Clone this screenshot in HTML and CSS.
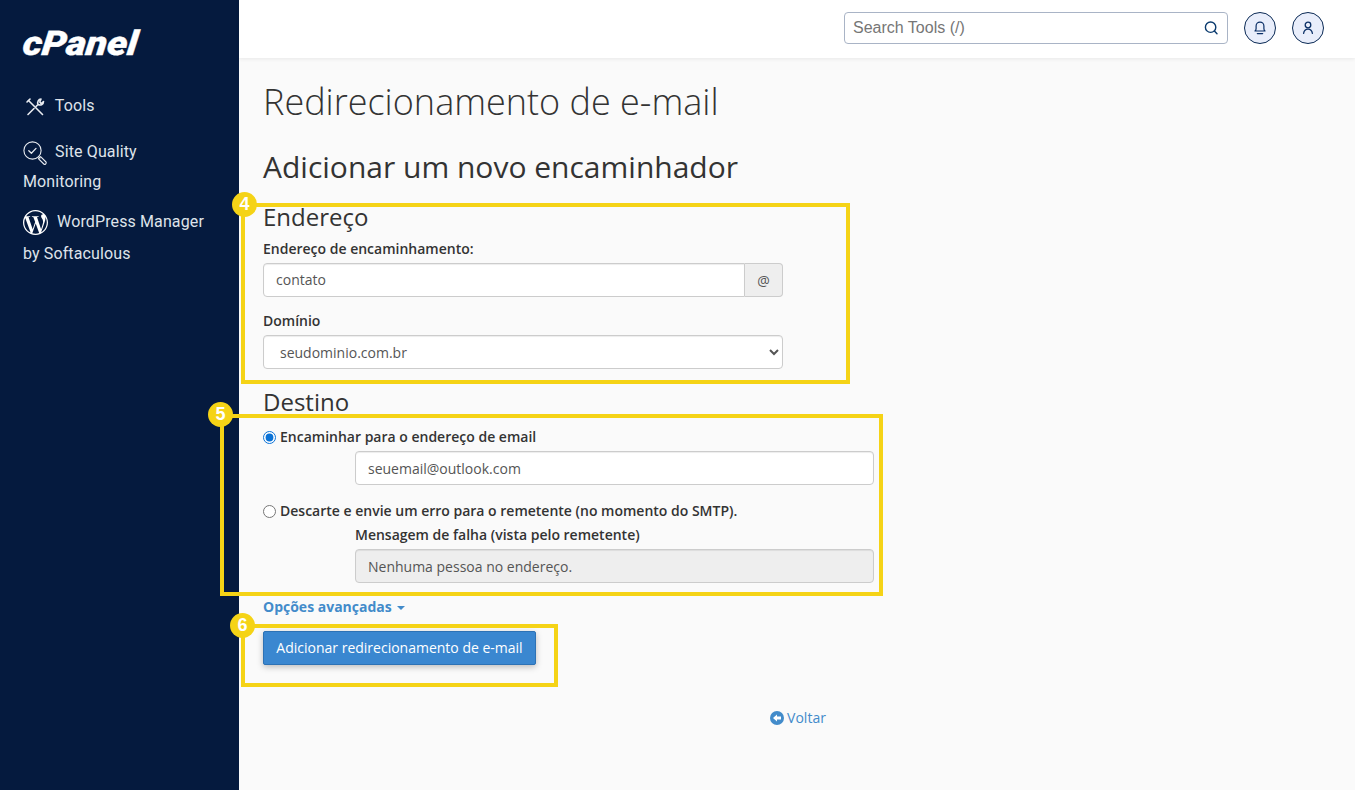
FILE: index.html
```html
<!DOCTYPE html>
<html lang="pt-BR">
<head>
<meta charset="utf-8">
<title>Redirecionamento de e-mail</title>
<link rel="stylesheet" href="styles.css">
</head>
<body>
<div class="app">
  <aside class="sidebar">
    <div class="logo"><span class="logo-text">cPanel</span></div>
    <nav class="nav">
      <a class="nav-item nav-tools">
        <svg class="ico ico-tools" viewBox="0 0 20 20" fill="none" stroke="#e8ebf0" stroke-width="1.6" stroke-linecap="round" stroke-linejoin="round">
          <path d="M2 5 L5 2"/>
          <path d="M3.5 3.5 L17.5 17.5"/>
          <path d="M3 17.5 L9 11.5"/>
          <path d="M11 9.5 L13 7.5 C12 5 13.5 2 16 2 L14.8 5 L16 6.5 L18.5 4.5 C18.5 7 16 9 13 7.5"/>
        </svg>
        <span>Tools</span>
      </a>
      <a class="nav-item nav-sqm">
        <svg class="ico ico-sqm" viewBox="0 0 24 24" fill="none" stroke="#e8ebf0" stroke-width="1.1" stroke-linecap="round" stroke-linejoin="round">
          <circle cx="9.5" cy="9.5" r="8.6"/>
          <path d="M5.8 9.8 L8.4 12.2 L13 7.4" stroke-width="1.3"/>
          <path d="M15.6 15.6 L17 17"/>
          <path d="M17.6 15.6 L23 21 Q23.6 22 22.6 23 Q21.7 23.8 20.8 23 L15.4 17.6 Z"/>
        </svg>
        <span>Site Quality Monitoring</span>
      </a>
      <a class="nav-item nav-wp">
        <svg class="ico ico-wp" viewBox="0 0 24 24" fill="#fff"><path d="M21.469 6.825c.84 1.537 1.318 3.3 1.318 5.175 0 3.979-2.156 7.456-5.363 9.325l3.295-9.527c.615-1.54.82-2.771.82-3.864 0-.405-.026-.78-.07-1.11m-7.981.105c.647-.03 1.232-.105 1.232-.105.582-.075.514-.93-.067-.899 0 0-1.755.135-2.88.135-1.064 0-2.85-.15-2.85-.15-.585-.03-.661.855-.075.885 0 0 .54.061 1.125.09l1.68 4.605-2.37 7.08L5.354 6.9c.649-.03 1.234-.1 1.234-.1.585-.075.516-.93-.065-.896 0 0-1.746.138-2.874.138-.2 0-.438-.008-.69-.015C4.911 3.15 8.235 1.215 12 1.215c2.809 0 5.365 1.072 7.286 2.833-.046-.003-.091-.009-.141-.009-1.06 0-1.812.923-1.812 1.914 0 .89.513 1.643 1.06 2.531.411.72.89 1.643.89 2.977 0 .915-.354 1.994-.821 3.479l-1.075 3.585-3.9-11.61.001.014zM12 22.784c-1.059 0-2.081-.153-3.048-.437l3.237-9.406 3.315 9.087c.024.053.05.101.078.149-1.12.393-2.325.609-3.582.609M1.211 12c0-1.564.336-3.05.935-4.39L7.29 21.709C3.694 19.96 1.212 16.271 1.211 12M12 0C5.385 0 0 5.385 0 12s5.385 12 12 12 12-5.385 12-12S18.615 0 12 0"/></svg>
        <span>WordPress Manager by Softaculous</span>
      </a>
    </nav>
  </aside>
  <div class="main">
    <header class="topbar">
      <div class="search">
        <input class="search-input" type="text" placeholder="Search Tools (/)">
        <svg class="search-ico" viewBox="0 0 16 16" fill="none" stroke="#0a3a6e" stroke-width="1.4" stroke-linecap="round"><circle cx="7.6" cy="7.2" r="5.2"/><path d="M11.4 11 L14 13.8"/></svg>
      </div>
      <button class="round-btn" aria-label="Notificações">
        <svg viewBox="0 0 16 16" fill="none" stroke="#0a2f66" stroke-width="1.2" stroke-linecap="round" stroke-linejoin="round"><path d="M3 11 H13 Q11.9 10 11.9 8.4 V6 A3.9 3.9 0 0 0 4.1 6 V8.4 Q4.1 10 3 11 Z"/><path d="M5.4 13.6 H10.6" stroke-width="1.4"/></svg>
      </button>
      <button class="round-btn" aria-label="Usuário">
        <svg viewBox="0 0 16 16" fill="none" stroke="#0a2f66" stroke-width="1.3" stroke-linecap="round"><circle cx="8" cy="5" r="2.8"/><path d="M3.6 13.4 C4 10.8 5.6 9.2 8 9.2 C10.4 9.2 12 10.8 12.4 13.4"/></svg>
      </button>
    </header>
    <main class="content">
      <h1 class="page-title">Redirecionamento de e-mail</h1>
      <h2 class="sub-title">Adicionar um novo encaminhador</h2>
      <form class="form">
        <h3 class="sec-title">Endereço</h3>
        <label class="label">Endereço de encaminhamento:</label>
        <div class="input-group">
          <input class="field group-field" type="text" value="contato">
          <span class="addon">@</span>
        </div>
        <label class="label label-domain">Domínio</label>
        <select class="field select"><option>seudominio.com.br</option></select>
        <h3 class="sec-title sec-dest">Destino</h3>
        <label class="radio-row"><input type="radio" name="dest" checked><span>Encaminhar para o endereço de email</span></label>
        <div class="indent"><input class="field wide" type="text" value="seuemail@outlook.com"></div>
        <label class="radio-row radio-two"><input type="radio" name="dest"><span>Descarte e envie um erro para o remetente (no momento do SMTP).</span></label>
        <div class="indent">
          <div class="fail-label">Mensagem de falha (vista pelo remetente)</div>
          <input class="field wide" type="text" value="Nenhuma pessoa no endereço." disabled>
        </div>
        <a class="advanced">Opções avançadas <i class="caret"></i></a>
        <button class="submit" type="button">Adicionar redirecionamento de e-mail</button>
      </form>
      <div class="back">
        <a class="back-link">
          <svg viewBox="0 0 14 14"><circle cx="7" cy="7" r="7" fill="#428bca"/><path d="M3 7 L7 3.4 V5.6 H11 V8.4 H7 V10.6 Z" fill="#fff"/></svg>
          <span>Voltar</span>
        </a>
      </div>
    </main>
  </div>
</div>
<div class="frame frame-4"><span class="badge">4</span></div>
<div class="frame frame-5"><span class="badge">5</span></div>
<div class="frame frame-6"><span class="badge">6</span></div>
</body>
</html>
```
FILE: styles.css
```css
* { box-sizing: border-box; }
html, body { margin: 0; height: 100%; overflow: hidden; }
body { font-family: "Open Sans", sans-serif; color: #333; background: #fafafa; }
.app { display: flex; height: 790px; }

.sidebar { width: 239px; flex: none; background: #051a3e; padding: 25px 23px 0; font-family: Roboto, sans-serif; }
.logo { height: 36px; }
.logo-text { display: inline-block; margin-left: -2px; font-family: Roboto, sans-serif; font-weight: 900; font-style: italic; font-size: 34px; line-height: 36px; color: #fff; -webkit-text-stroke: .4px #fff; transform-origin: left bottom; transform: scaleX(1.13) skewX(-6deg); }
.nav { margin-top: 30px; }
.nav-item { display: block; color: #dfe3ea; font-size: 16px; font-weight: 400; letter-spacing: .12px; line-height: 30px; }
.ico { display: inline-block; vertical-align: middle; }
.ico-tools { width: 20px; height: 20px; margin-right: 6px; margin-left: 2px; }
.nav-tools { height: 30px; margin-bottom: 16px; }
.ico-sqm { width: 24px; height: 24px; margin-right: 4px; }
.nav-sqm { margin-bottom: 9px; }
.ico-wp { width: 25px; height: 25px; margin-right: 5px; }
.nav-wp { line-height: 32px; }

.main { flex: 1; min-width: 0; display: flex; flex-direction: column; }
.topbar { height: 58px; flex: none; background: #fff; box-shadow: 0 1px 4px rgba(0,0,0,.08); display: flex; align-items: center; justify-content: flex-end; padding: 0 31px 2px 0; gap: 16px; }
.search { width: 384px; height: 32px; border: 1px solid #a9b4c6; border-radius: 4px; display: flex; align-items: center; padding: 0 8px; }
.search-input { flex: 1; border: 0; outline: 0; font-family: "Liberation Sans", sans-serif; font-size: 16px; padding: 0; background: transparent; min-width: 0; }
.search-input::placeholder { color: #767676; opacity: 1; }
.search-ico { width: 16px; height: 16px; flex: none; }
.round-btn { width: 32px; height: 32px; padding: 0; border-radius: 50%; border: 1px solid #0b2a55; background: #e9eefb; display: flex; align-items: center; justify-content: center; }
.round-btn svg { width: 16px; height: 16px; }

.content { padding: 0 24px; flex: 1; }
.page-title { font-weight: 300; font-size: 36px; line-height: 40px; margin: 24px 0 0; color: #333; }
.sub-title { font-weight: 400; font-size: 30px; line-height: 33px; margin: 28px 0 0; color: #333; }
.form { width: 611px; }
.sec-title { font-weight: 400; font-size: 24px; line-height: 26px; margin: 21px 0 0; color: #333; }
.sec-dest { margin-top: 20px; }
.label { display: block; font-weight: 600; font-size: 14px; line-height: 20px; margin-top: 9px; }
.label-domain { margin-top: 14px; }
.field { display: block; height: 34px; border: 1px solid #ccc; border-radius: 4px; background: #fff; font-family: "Open Sans", sans-serif; font-size: 14px; color: #555; padding: 6px 12px; box-shadow: inset 0 1px 1px rgba(0,0,0,.075); }
.field:disabled { background: #eee; color: #555; -webkit-text-fill-color: #555; opacity: 1; }
.input-group { display: flex; width: 520px; margin-top: 4px; }
.group-field { flex: 1; min-width: 0; border-radius: 4px 0 0 4px; padding: 4px 12px 6px; }
.addon { width: 38px; height: 34px; flex: none; border: 1px solid #ccc; border-left: 0; border-radius: 0 4px 4px 0; background: #eee; color: #555; font-size: 14px; display: flex; align-items: center; justify-content: center; }
.select { width: 520px; margin-top: 4px; }
.radio-row { display: flex; align-items: center; font-weight: 600; font-size: 14px; line-height: 20px; margin-top: 12px; }
.radio-row input { margin: 0 4px 0 0; width: 13px; height: 13px; accent-color: #0a72d6; }
.radio-two { margin-top: 16px; }
.indent { margin-left: 92px; }
.wide { width: 519px; }
.indent > .wide { margin-top: 4px; }
.fail-label { font-weight: 600; font-size: 14px; line-height: 20px; margin-top: 4px; }
.advanced { display: block; font-weight: 700; font-size: 14px; line-height: 20px; color: #428bca; margin-top: 14px; }
.caret { display: inline-block; width: 0; height: 0; border-left: 4px solid transparent; border-right: 4px solid transparent; border-top: 4px solid #428bca; vertical-align: middle; margin-left: 2px; }
.submit { display: block; height: 34px; margin-top: 14px; padding: 4px 12px 6px; width: 273px; font-family: "Open Sans", sans-serif; font-size: 14px; color: #fff; background: #3a87d0; border: 1px solid #2d72b5; border-radius: 2px; box-shadow: 0 2px 6px rgba(0,0,0,.25); white-space: nowrap; }
.back { text-align: center; margin-top: 43px; padding-left: 2px; font-size: 14px; line-height: 20px; color: #428bca; }
.back-link { display: inline-flex; align-items: center; gap: 3px; }
.back-link svg { width: 14px; height: 14px; }

.frame { position: absolute; border: 4px solid #f5d316; pointer-events: none; }
.frame-4 { left: 241px; top: 203px; width: 609px; height: 181px; }
.frame-5 { left: 220px; top: 414px; width: 663px; height: 182px; }
.frame-6 { left: 241px; top: 624px; width: 317px; height: 63px; }
.badge { position: absolute; left: -13px; top: -15px; width: 25px; height: 25px; border-radius: 50%; background: #f5d316; color: #fff; font-family: "Liberation Sans", sans-serif; font-weight: 700; font-size: 18px; line-height: 25px; text-align: center; }
.frame-5 .badge { left: -16px; top: -16px; }
.frame-6 .badge { left: -15px; top: -15px; }
```
